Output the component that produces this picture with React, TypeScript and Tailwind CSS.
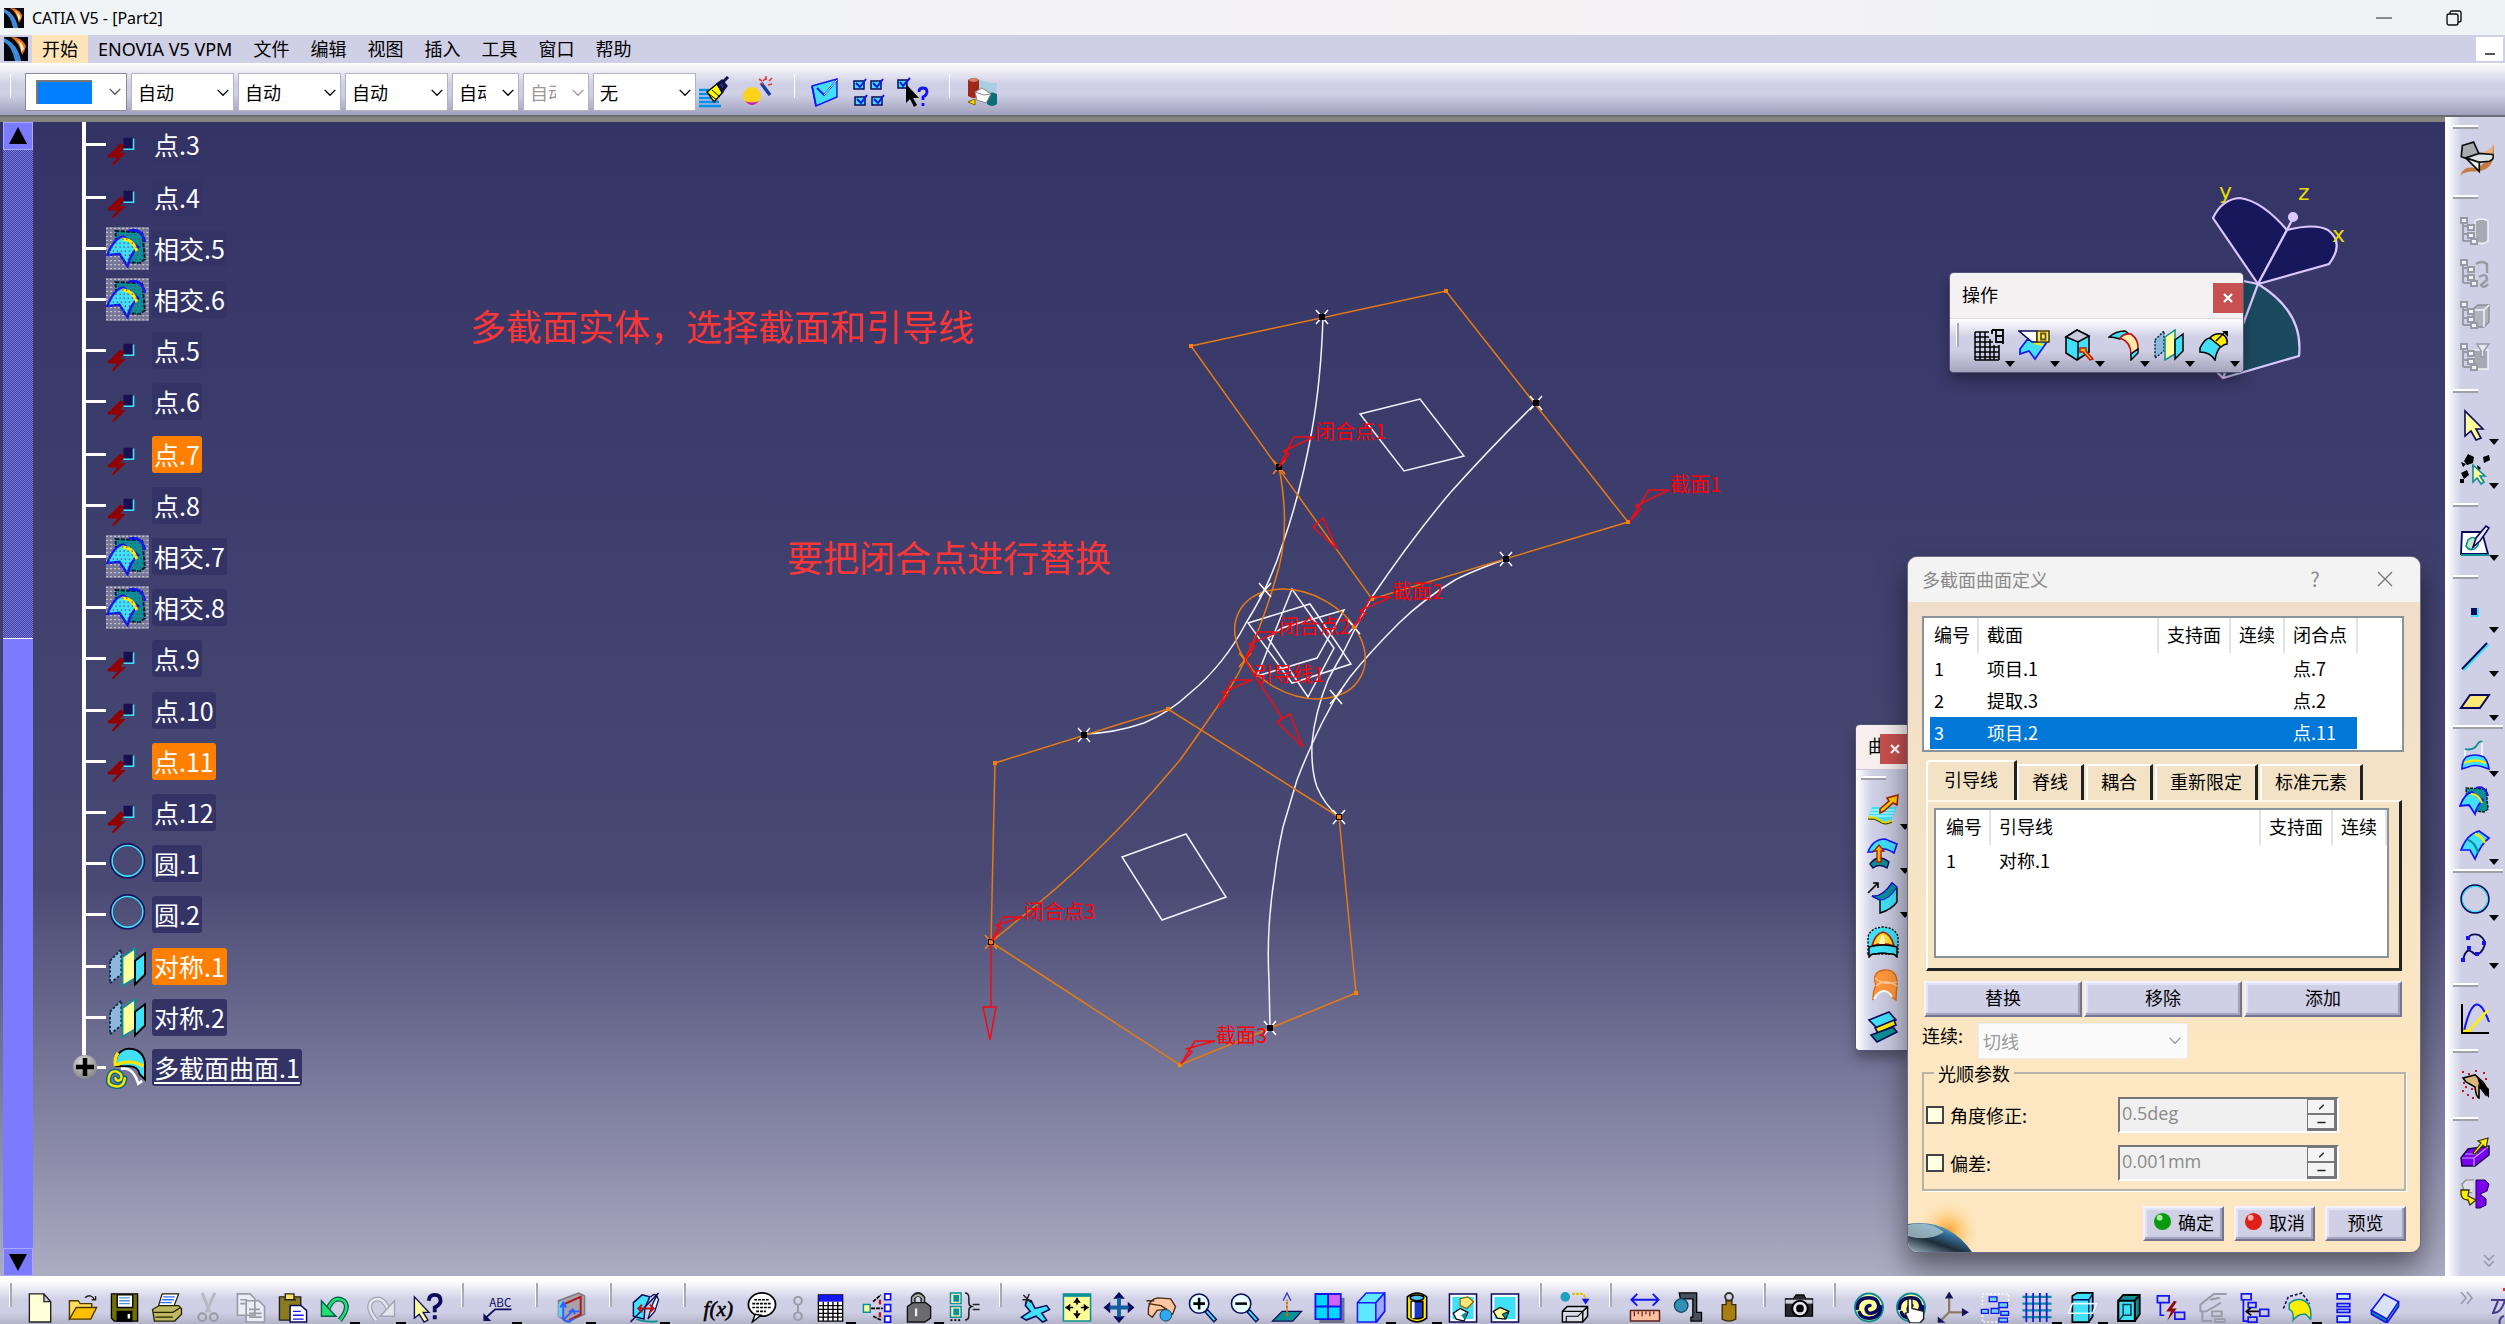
import type { ReactNode } from "react";
import clsx from "clsx";

const NAVY = "#0a0a5c";
const BLUE = "#1414f0";
const CYAN = "#40e0f8";
const TEAL = "#0a9096";
const CREAM = "#ffff99";
const GRAY = "#9a9aa6";

const workTree = (
  <g fill="#f2f2f8" stroke={GRAY} strokeWidth="2">
    <path d="M4 5v20M4 10h5M4 18h5M4 25h8" fill="none" />
    <path d="M2 2h6v5H2zM9 9h6v5H9zM9 17h6v5H9zM12 23h6v5h-6z" />
  </g>
);

const mirrorArt = (
  <g>
    <path d="M2 11l9-9v20l-9 7z" fill="#8cb8dc" stroke="#0a2a4a" strokeWidth="1.5" strokeDasharray="2 1.5" />
    <path d="M12 8L22 1v24l-10 6z" fill="#ffff99" stroke={TEAL} strokeWidth="1.5" />
    <path d="M22 11l8-6v17l-8 8z" fill={CYAN} stroke="#000" strokeWidth="1.5" />
  </g>
);

const intersectArt = (
  <g>
    <path d="M7 3l20 1 2 20-4 3-9-1-8-9z" fill={TEAL} stroke="#001a2a" strokeWidth="1.5" strokeDasharray="3 1" />
    <path d="M1 21Q6 8 13 7l11 8q-6 5-8 14l-6-9z" fill={CYAN} stroke={BLUE} strokeWidth="1.8" />
    <path d="M12 9q8 0 11 9" fill="none" stroke="#ffee00" strokeWidth="2.2" />
    <path d="M17 3q9-3 12 8" fill="none" stroke={BLUE} strokeWidth="2" />
  </g>
);

const loftArt = (
  <g>
    <path d="M7 15Q7 3 17 2q10 0 12 10v13l-4-4q-1-6-8-6z" fill={CYAN} stroke="#000" strokeWidth="1.4" />
    <path d="M8 14q9-5 20 1M9 5q-3 4-2 10" fill="none" stroke="#ffe600" strokeWidth="2.4" />
    <path d="M11 17q9-2 13 11l3-2" fill="none" stroke="#fff" strokeWidth="2" />
  </g>
);

const gear = (
  <g fill="none" strokeLinecap="round">
    <circle cx="16" cy="16" r="14.5" fill={CREAM} stroke={TEAL} strokeWidth="2" />
    <path d="M4 17Q4 6 16 6q9 0 10 8 0 7-8 8-5 0-5-5 1-3 4-3" stroke={NAVY} strokeWidth="3.6" />
    <path d="M28 15q0 12-12 12-8 0-10-6" stroke={NAVY} strokeWidth="3.6" />
  </g>
);

const lens = (
  <g>
    <path d="M19 19l10 11" stroke={NAVY} strokeWidth="5" />
    <path d="M20 20l8 9" stroke={CYAN} strokeWidth="2" />
    <circle cx="12" cy="12" r="10" fill="#e8ffff" stroke={NAVY} strokeWidth="1.6" />
  </g>
);

const icons: Record<string, ReactNode> = {
  point: (
    <g>
      <path d="M11 16L4 23h5l-7 1v1h8L5 31l8-8H9l4-5z" fill="#900000" stroke="#900000" strokeWidth="1.4" />
      <path d="M13 11h7v8h-7z" fill="#1a1050" />
      <path d="M20.500 11.500v8H13" fill="none" stroke={CYAN} strokeWidth="1.2" />
    </g>
  ),
  intersect: (
    <g>
      <path d="M0 0h32v32H0z" fill="#77779a" />
      <path d="M0 1h32M0 4h32M0 7h32M0 10h32M0 13h32M0 16h32M0 19h32M0 22h32M0 25h32M0 28h32M0 31h32" stroke="#c4c4c4" strokeWidth="1" strokeDasharray="1.500 1.500" />
      {intersectArt}
      <path d="M6 6h24M6 9h24M4 12h26M4 15h26M2 18h28M2 21h28M10 24h18M12 27h14" stroke="#50507c" strokeWidth="1" strokeDasharray="1 2" />
    </g>
  ),
  intersectTool: intersectArt,
  circleDark: (
    <g fill="none">
      <circle cx="16" cy="14" r="12" stroke="#16165c" strokeWidth="2.5" />
      <circle cx="16" cy="14" r="11.4" stroke={CYAN} strokeWidth="1.2" />
    </g>
  ),
  mirror: mirrorArt,
  loft: (
    <g>
      {loftArt}
      <g fill="none" strokeLinecap="round">
        <path d="M2 24q1-6 6-5 5 2 3 6-3 2-4-1M14 24q-1 7-7 6-6-1-5-5" stroke="#0a6a80" strokeWidth="4" />
        <path d="M2 24q1-6 6-5 5 2 3 6-3 2-4-1M14 24q-1 7-7 6-6-1-5-5" stroke="#ffe600" strokeWidth="1.8" />
      </g>
    </g>
  ),
  brush: (
    <g>
      <path d="M1 14h13M1 18h12M1 22h16M1 26h20M1 30h22" stroke="#0090f0" strokeWidth="2.4" />
      <path d="M9 16l10-8 6 8-9 10z" fill="#ffff00" stroke="#000" strokeWidth="1.4" />
      <path d="M11 18l8 6M14 14l8 7" stroke="#000" strokeWidth="1" />
      <path d="M20 8l4-3 4 5-4 5zM25 6l5-5" fill="#203080" stroke="#101040" strokeWidth="3" />
    </g>
  ),
  wizard: (
    <g>
      <circle cx="10" cy="20" r="9" fill="#ffd21a" />
      <path d="M3 25q7 8 14 0-7 3-14 0z" fill="#c01ad0" />
      <path d="M19 7l9 12" stroke="#1a3aa0" strokeWidth="3.4" />
      <path d="M17 3l3 2M24 0v4M30 2l-3 3M30 8l-4 1M21 5l3-3M18 8h3" stroke="#d04040" strokeWidth="1.6" />
    </g>
  ),
  sheetCheck: (
    <g>
      <path d="M3 10L28 3v18L7 30z" fill={CYAN} stroke={BLUE} strokeWidth="1.4" />
      <path d="M3 10l4 20M8 12l7 7L28 4" fill="none" stroke={BLUE} strokeWidth="1.8" />
      <path d="M28 4L15 19" stroke="#fff" strokeWidth="1" />
    </g>
  ),
  checks: (
    <g fill={CYAN} stroke={NAVY} strokeWidth="1.5">
      <path d="M1 5h10v8H1zM18 5h10v8H18zM2 21h10v8H2zM19 21h10v8H19z" />
      <path d="M3 7l4 4 6-8M20 7l4 4 6-8M4 23l4 4 6-8M21 23l4 4 6-8" fill="none" stroke={BLUE} strokeWidth="2" />
    </g>
  ),
  checkHelp: (
    <g>
      <path d="M1 4h9v8H1z" fill={CYAN} stroke={NAVY} strokeWidth="1.5" />
      <path d="M3 6l3 4 7-8" fill="none" stroke={BLUE} strokeWidth="2" />
      <path d="M9 8v19l4-4 4 8 3-2-4-7h6z" fill="#000" />
      <path d="M22 16q0-4 4-4t4 4q0 3-4 5v3M26 27v3" fill="none" stroke={BLUE} strokeWidth="2.8" />
    </g>
  ),
  partner: (
    <g>
      <path d="M9 1q10 7 22 6l-2 16-12 4z" fill="#a8cce0" />
      <path d="M2 4q6-4 11 0v16q-5 4-11 0z" fill="#a02818" />
      <path d="M2 4q6-4 11 0-5 4-11 0z" fill="#d88070" />
      <path d="M21 18q5-3 10 0v10q-5 4-10 0z" fill="#0a7078" />
      <path d="M9 16l7-4 9 6-5 9-9-3z" fill="#fff" stroke="#888" strokeWidth="1" />
      <path d="M9 16l9 3 7-1" fill="none" stroke="#888" strokeWidth="1" />
      <path d="M2 26l7-3v6z" fill="#ffe000" stroke="#806000" strokeWidth="1" />
    </g>
  ),
  workbench: (
    <g>
      <path d="M1 31Q4 22 14 24 28 20 31 2v12Q28 28 12 27 4 27 1 31z" fill="#c47a40" />
      <path d="M20 10Q29 8 31 1l-2 16z" fill="#e8b088" />
      <path d="M3 4L13 1l5 11-10 4-6-2z" fill="#a8acae" stroke="#111" strokeWidth="1.5" />
      <path d="M6 15l12-4 12 1q2 4-3 6l-10 1z" fill="#dfe3e4" stroke="#111" strokeWidth="1.5" />
      <path d="M6 15l12 4v8z" fill="#f4f6f6" stroke="#111" strokeWidth="1.5" />
    </g>
  ),
  grayA: (
    <g>
      <path d="M16 5q7-4 13 0v20q-6 5-13 0z" fill="#a8a8b2" stroke="#f4f4fa" strokeWidth="1.4" />
      {workTree}
    </g>
  ),
  grayB: (
    <g>
      {workTree}
      <path d="M17 6q6-4 11 0v9M20 19q8-5 8 3l-6 5q3 4 7-1" fill="none" stroke={GRAY} strokeWidth="2.4" />
    </g>
  ),
  grayC: (
    <g>
      <path d="M14 9l5-4h11v17l-5 5H14z" fill="#b2b2bc" stroke="#8e8e98" strokeWidth="1.4" />
      <path d="M14 10h11v17M25 10l5-5" fill="none" stroke="#f4f4fa" strokeWidth="1.5" />
      {workTree}
    </g>
  ),
  grayD: (
    <g>
      <path d="M15 8h14v19H15z" fill="#a8a8b2" stroke="#f4f4fa" strokeWidth="1.4" />
      <path d="M18 2h12l-5 7v6h-3V9z" fill="#e6e6ee" stroke={GRAY} strokeWidth="1.5" />
      {workTree}
    </g>
  ),
  arrow: (
    <path d="M6 2v25l6-5 5 9 5-2-5-9h7z" fill={CREAM} stroke={NAVY} strokeWidth="1.6" />
  ),
  geoSelect: (
    <g>
      <path d="M9 1l6 3-1 6-6 2-3-4zM24 4l6-2 1 5-6 3zM2 20l6-3 2 5-5 4zM18 12l4 3-3 3zM1 26h4v4H1zM13 13l3 2-2 2zM2 9l5 2-3 3z" fill="#000" />
      <path d="M14 12v17l4-4 4 6 3-2-4-6h5z" fill={CREAM} stroke={TEAL} strokeWidth="1.6" />
    </g>
  ),
  sketch: (
    <g>
      <path d="M3 7h20l6 22H2z" fill="#fff" stroke={NAVY} strokeWidth="1.8" />
      <path d="M2 30h28" stroke={TEAL} strokeWidth="2" />
      <path d="M9 15q5-5 9 0t-3 9q-5 2-8-3z" fill="#c8e8c8" stroke={TEAL} strokeWidth="1.6" />
      <path d="M14 22l3-9L27 1l3 2-9 13z" fill="#e8e8ff" stroke={NAVY} strokeWidth="1.6" />
    </g>
  ),
  pointTool: (
    <g>
      <path d="M12 11h8v9h-8z" fill={CYAN} />
      <path d="M12 11h6v7h-6z" fill={NAVY} />
    </g>
  ),
  line: (
    <g>
      <path d="M4 29L29 3" stroke={CYAN} strokeWidth="3.4" />
      <path d="M3 28L28 2" stroke={NAVY} strokeWidth="2" />
    </g>
  ),
  plane: <path d="M11 10h19l-9 13H2z" fill="#ffe873" stroke={NAVY} strokeWidth="2" />,
  sweep: (
    <g>
      <path d="M6 10q8 2 12-4 3-5 5-3" fill="none" stroke={TEAL} strokeWidth="1.8" />
      <path d="M6 11v8M23 4v13" stroke="#fff" strokeWidth="1.4" />
      <path d="M3 30q0-8 4-12 9-4 18 0 4 4 5 12l-6-2q-8-3-15 0z" fill={CYAN} stroke={BLUE} strokeWidth="1.6" />
      <path d="M5 24q11-5 22 0" fill="none" stroke="#ffe600" strokeWidth="2.4" />
    </g>
  ),
  fillSurf: (
    <g>
      <path d="M2 21Q8 5 20 2l10 7q-8 6-14 21l-5-9z" fill={CYAN} stroke={BLUE} strokeWidth="1.7" />
      <path d="M9 11q7 2 10 13" fill="none" stroke={TEAL} strokeWidth="2.2" />
      <path d="M16 5q7 2 10 9" fill="none" stroke="#ffe600" strokeWidth="2.4" />
    </g>
  ),
  circle: (
    <g fill="none">
      <circle cx="16" cy="16" r="13.5" stroke={NAVY} strokeWidth="2.4" />
      <circle cx="16" cy="16" r="12.6" stroke={CYAN} strokeWidth="1.2" />
    </g>
  ),
  spline: (
    <g>
      <path d="M9 7q3-5 11-3 9 6 4 14-5 9-11 3-6-5-9 8" fill="none" stroke={NAVY} strokeWidth="1.8" />
      <path d="M7 5h4v4H7zM23 10h4v4h-4zM16 21h4v4h-4zM8 15h4v4H8zM2 27h4v4H2z" fill={BLUE} />
    </g>
  ),
  chart: (
    <g fill="none" strokeWidth="2">
      <path d="M5 28Q16-20 30 19" stroke={BLUE} />
      <path d="M4 28h6L29 7" stroke="#ffee00" strokeWidth="2.6" />
      <path d="M3 1v29h27" stroke="#000" />
    </g>
  ),
  wand: (
    <g>
      <path d="M3 3h2M9 5h2M16 2h2M24 4h2M4 14h2M3 22h2M8 26h2M12 20h2M26 10h2M6 18h2M13 29h2" stroke="#c01818" strokeWidth="2.2" />
      <path d="M4 9l12-3 8 7q5 6 3 13l-7-9v12q-3-1-4-11l-9-5z" fill="#d8b878" stroke="#000" strokeWidth="1.6" />
      <path d="M18 8l12 12v9l-9-11z" fill="#000" />
    </g>
  ),
  extrude: (
    <g>
      <path d="M2 22l7-9 21-3v9L16 30H3z" fill="#7a00f0" stroke="#1a0050" strokeWidth="1.5" />
      <path d="M3 22h12l14-11M6 18h12M15 22v8" fill="none" stroke="#c8a0ff" strokeWidth="1.2" />
      <path d="M14 17l8-10-3-2 10-3-2 10-3-3-8 9z" fill="#ffee00" stroke="#333300" strokeWidth="1.2" />
    </g>
  ),
  revolve: (
    <g>
      <path d="M17 2h9l4 4-2 7-7 3 6 5v6l-6 3h-4z" fill="#7a00f0" stroke="#1a0050" strokeWidth="1" />
      <path d="M15 2H7L3 6l2 7 8 2" fill="#dcdce6" stroke="#888" strokeWidth="1.2" />
      <path d="M2 12h8l-1 6 8 4-6 5-2-5q-8 0-7-10z" fill="#ffee00" stroke="#333300" strokeWidth="1.3" />
    </g>
  ),
  extrapol: (
    <g>
      <path d="M5 13h25l-5 12q-8 4-13 1T1 24z" fill={CYAN} />
      <path d="M4 16h24M3 19h24M2 22h24" fill="none" stroke="#e8ffff" strokeWidth="1.2" />
      <path d="M1 24q7-1 12 3t12 0" fill="none" stroke="#e8e000" strokeWidth="3" />
      <path d="M1 25q7-1 12 3t12 0" fill="none" stroke="#222" strokeWidth="1" />
      <path d="M13 15l9-8-2-3 11-3-1 10-4-2-9 8-4 2z" fill="#ffcc00" stroke="#a02000" strokeWidth="1.5" />
    </g>
  ),
  offset: (
    <g>
      <path d="M1 14Q6 1 18 1l12 5-3 9q-12-8-22-1z" fill={CYAN} stroke={BLUE} strokeWidth="1.6" />
      <path d="M3 26q8-11 19-2l-2 6q-8-5-14 0z" fill={TEAL} stroke={NAVY} strokeWidth="1.4" />
      <path d="M10 24V13H7l5-6 5 6h-3v11z" fill="#ffb400" stroke="#a02000" strokeWidth="1.3" />
    </g>
  ),
  extrudeSurf: (
    <g>
      <path d="M1 11L11 1M6 1h5v5" fill="none" stroke="#000" strokeWidth="1.6" />
      <path d="M5 14q10 2 20-13l5 5v14Q24 28 13 31V18z" fill={CYAN} stroke="#000" strokeWidth="1.4" />
      <path d="M5 14q10 2 20-13l5 4Q22 18 13 18z" fill={TEAL} stroke={BLUE} strokeWidth="1.2" />
    </g>
  ),
  cap: (
    <g>
      <path d="M1 28V11Q3 2 16 1q13 1 15 10v17z" fill={CYAN} stroke="#000" strokeWidth="1.4" strokeDasharray="2 1.5" />
      <path d="M5 20Q8 8 16 6q8 2 11 14-11-4-22 0z" fill="#ffe030" stroke="#b02000" strokeWidth="1.8" />
      <path d="M12 18q1-8 4-9 2 2 2 9z" fill="#fff8c0" />
      <path d="M2 21q14-4 28 0v10q-3-4-8-3-7-2-13 0-4-1-7 3z" fill={CYAN} stroke="#000" strokeWidth="1.4" />
    </g>
  ),
  orangeLoft: (
    <g fill="#ff963c" stroke="#d86a10" strokeWidth="1.3">
      <path d="M9 16Q4 3 17 1q13-1 13 13l-1 17-5-4q-2-6-9-5-5 1-9 9 0-9 3-15z" />
      <path d="M9 17q9-8 21 0M8 9q9 8 22 4" fill="none" stroke="#ffd0a0" />
      <path d="M7 30q4-8 10-8 5 0 8 6" fill="none" stroke="#fff" strokeWidth="2" />
    </g>
  ),
  bands: (
    <g strokeWidth="1.6">
      <path d="M2 9l20-8 7 8L10 17z" fill={CYAN} stroke={NAVY} />
      <path d="M8 17l19-8 2 5-18 8z" fill="#ffee00" stroke={NAVY} />
      <path d="M4 24l22-8 4 5-20 10z" fill={TEAL} stroke={NAVY} />
    </g>
  ),
  gridOp: (
    <g fill="none" stroke="#000" strokeWidth="1.5">
      <path d="M2 3h14M2 8h14M2 13h18M2 18h24M2 23h24M2 28h24M2 31h24M2 3v28M7 3v28M12 3v28M17 10v21M21 16v15M26 16v15" />
      <path d="M19 1h11v14M19 1v4M23 1v12h7M23 7h7" strokeWidth="1.8" />
    </g>
  ),
  healing: (
    <g>
      <path d="M2 20l7-9 20 2L17 30l-6-8-9 3z" fill={CYAN} stroke={BLUE} strokeWidth="1.7" />
      <path d="M16 14l9 2" stroke="#ffe600" strokeWidth="2.2" />
      <path d="M1 2h18v11h-5z" fill="#fff" stroke={NAVY} strokeWidth="1.6" />
      <path d="M19 2h12v11H19z" fill="#ffe873" stroke="#4a4000" strokeWidth="1.6" />
      <path d="M23 4.500h4.500v6H23z" fill="#ffe873" stroke="#6a5600" strokeWidth="1.8" />
    </g>
  ),
  boundary: (
    <g>
      <path d="M3 8l11-7 12 6v16l-12 8-11-7z" fill={CYAN} stroke="#000" strokeWidth="1.6" />
      <path d="M3 8l11-7 12 6-11 6z" fill="#c8c8de" stroke="#000" strokeWidth="1.5" />
      <path d="M15 13v17" stroke="#000" strokeWidth="1.5" />
      <path d="M17 19h6v3l7 8-3 1-7-8h-3z" fill="#ffb400" stroke="#c01010" strokeWidth="1.4" />
    </g>
  ),
  fillet: (
    <g>
      <path d="M1 8Q8 2 17 2l4 3q-6 3-9 5-6-2-11-2z" fill={CYAN} stroke="#000" strokeWidth="1.4" />
      <path d="M12 9q4-5 11-4 8 6 7 15l-7 5q0-12-11-16z" fill="#ffe8a8" stroke="#c01010" strokeWidth="1.6" />
      <path d="M23 25l7-5v4l-7 7z" fill={CYAN} stroke="#000" strokeWidth="1.4" />
    </g>
  ),
  extend: (
    <g>
      <path d="M2 19q5-10 10-10l11 8q-5 6-6 14-5-8-15-8z" fill={CYAN} stroke="#000" strokeWidth="1.6" />
      <path d="M12 9q4-5 12-4 6 3 5 10-3 0-6 3z" fill="#ffee00" stroke="#000" strokeWidth="1.5" />
      <path d="M18 12l8-8" stroke="#000" strokeWidth="1.5" />
      <path d="M24 2h6v6z" fill="#000" />
    </g>
  ),
  newFile: <path d="M4 2h15l7 8v21H4zM19 2v8h7" fill="#ffffd8" stroke="#222" strokeWidth="1.4" />,
  open: (
    <g stroke="#4a3400" strokeWidth="1.4">
      <path d="M2 28V9h9l2 3h12v6H10z" fill="#ffe060" />
      <path d="M2 28l7-12h21l-6 12z" fill="#ffc000" />
      <path d="M18 6q6-5 10 2M25 8h4V4" fill="none" stroke="#222" />
    </g>
  ),
  save: (
    <g stroke="#000" strokeWidth="1.4">
      <path d="M2 2h27v28H5l-3-3z" fill="#707000" />
      <path d="M8 3h16v13H8z" fill="#fff" />
      <path d="M10 6h11M10 9h11M10 12h11" stroke="#5090e0" />
      <path d="M8 20h15v10H8z" fill="#000" />
      <path d="M18 22h4v6h-4z" fill="#fff" />
    </g>
  ),
  print: (
    <g stroke="#222200" strokeWidth="1.3">
      <path d="M11 2h17l-5 13H7z" fill="#fff" />
      <path d="M12 5h12M11 8h12M9 11h12" stroke="#3070ff" />
      <path d="M1 18l7-4h20l3 3v6l-7 7H3z" fill="#c0b860" />
      <path d="M2 21h20l8-5M4 26h18" fill="none" />
    </g>
  ),
  cut: (
    <g fill="none" stroke={GRAY} strokeWidth="2">
      <path d="M9 1l8 20M22 1l-9 20" stroke="#b8b8c2" strokeWidth="3" />
      <circle cx="9" cy="26" r="4" />
      <circle cx="21" cy="26" r="4" />
    </g>
  ),
  copy: (
    <g fill="#ececf4" stroke={GRAY} strokeWidth="1.7">
      <path d="M2 2h13l5 5v17H2zM11 9h13l6 6v16H11z" />
      <path d="M14 18h11M14 22h13M14 26h13M5 8h7M5 12h5" />
    </g>
  ),
  paste: (
    <g>
      <path d="M2 5h22v24H2z" fill="#8a7a20" stroke="#222" strokeWidth="1.4" />
      <path d="M8 2h9v6H8zM7 8h12" fill="#ffe060" stroke="#222" strokeWidth="1.4" />
      <path d="M13 14h11l6 5v12H13z" fill="#fff" stroke={NAVY} strokeWidth="1.5" />
      <path d="M16 20h8M16 24h11M16 28h11" stroke={BLUE} strokeWidth="1.4" />
    </g>
  ),
  undo: (
    <g>
      <path d="M9 17q6-14 16-8 7 7-4 20" fill="none" stroke="#0a5a4a" strokeWidth="5" />
      <path d="M9 17q6-14 16-8 7 7-4 20" fill="none" stroke="#20e070" strokeWidth="2.6" />
      <path d="M2 9v16h15z" fill="#20e070" stroke="#0a5a4a" strokeWidth="1.4" />
    </g>
  ),
  redo: (
    <g>
      <path d="M23 17Q17 3 7 9q-7 7 4 20" fill="none" stroke="#a4a4ae" strokeWidth="5" />
      <path d="M23 17Q17 3 7 9q-7 7 4 20" fill="none" stroke="#e4e4ee" strokeWidth="2.6" />
      <path d="M30 9v16H15z" fill="#e4e4ee" stroke="#a4a4ae" strokeWidth="1.4" />
    </g>
  ),
  help: (
    <g>
      <path d="M3 5v22l5-4 5 8 4-2-5-8h6z" fill={CREAM} stroke={NAVY} strokeWidth="1.4" />
      <path d="M18 9q0-6 6-6t6 6q0 4-6 7v5M24 24v4" fill="none" stroke={NAVY} strokeWidth="4" />
    </g>
  ),
  abc: (
    <g>
      <text x="8" y="15" fontSize="12" fill={NAVY}>ABC</text>
      <path d="M31 18H14L4 27" fill="none" stroke={NAVY} strokeWidth="1.8" />
      <path d="M2 22v8h8z" fill={NAVY} />
    </g>
  ),
  bookAxis: (
    <g strokeWidth="1.5">
      <path d="M3 9L24 1l6 3v19l-18 8-9-6z" fill="#a8a0aa" stroke="#7a7a80" />
      <path d="M10 12L26 5v18l-12 6" fill="none" stroke="#b01818" strokeWidth="2" />
      <path d="M3 12l6-4v16l-6 2z" fill="#6ad0f8" stroke="none" />
      <path d="M8 29V12M5 16l3-5 3 5M8 29l9-9h8M14 21l4-3 2 5M8 29l6 2 5-4" fill="none" stroke="#2a60ff" strokeWidth="2" />
    </g>
  ),
  paramSurf: (
    <g>
      <path d="M4 11L13 3l8 2-5 11-1 12-11-3z" fill={CYAN} stroke={NAVY} strokeWidth="1.5" />
      <path d="M24 12l4-8 2 4-4 12-7 8z" fill="#dff4ff" stroke={NAVY} strokeWidth="1.3" />
      <path d="M1 31L30 1M22 5q4-5 7 0" fill="none" stroke={NAVY} strokeWidth="1.5" />
      <path d="M10 17h14M13 13l-4 4 4 4M21 13l4 4-4 4" fill="none" stroke="#c01010" strokeWidth="2" />
      <path d="M7 28q12 4 22 2" stroke={TEAL} fill="none" strokeWidth="1.8" />
    </g>
  ),
  fx: (
    <text x="0" y="25" fontSize="22" fontStyle="italic" fill="#000" stroke="#000" strokeWidth="0.6" className="font-['Liberation_Serif',serif]">
      f(x)
    </text>
  ),
  balloon: (
    <g>
      <ellipse cx="17" cy="13" rx="14" ry="12" fill="#fff" stroke="#000" strokeWidth="1.8" />
      <path d="M10 23l-3 8 9-7z" fill="#fff" stroke="#000" strokeWidth="1.5" />
      <path d="M9 8h16M7 12h20M7 16h20M11 20h10" stroke="#000" strokeWidth="1.8" strokeDasharray="3 1" />
    </g>
  ),
  grayLink: (
    <g fill="none" stroke={GRAY} strokeWidth="2">
      <circle cx="16" cy="9" r="4" />
      <circle cx="16" cy="25" r="4" />
      <path d="M16 13v8" />
    </g>
  ),
  table: (
    <g>
      <path d="M3 3h25v27H3z" fill="#fff" stroke="#000" strokeWidth="1.4" />
      <path d="M3 3h25v7H3z" fill={BLUE} />
      <path d="M3 14h25M3 18h25M3 22h25M3 26h25M8 10v20M13 10v20M18 10v20M23 10v20" stroke="#000" strokeWidth="1.4" />
    </g>
  ),
  relations: (
    <g>
      <path d="M2 13h7v8H2z" fill={CREAM} stroke={TEAL} strokeWidth="1.6" />
      <path d="M24 2h6v6h-6zM24 13h6v7h-6zM24 25h6v6h-6z" fill="#fff" stroke={BLUE} strokeWidth="1.8" />
      <path d="M10 17h12M12 10l8-7M12 25l8 4" stroke="#000" strokeWidth="1.8" strokeDasharray="4 1" />
      <path d="M19 8v5M19 21v5" stroke="#c01010" strokeWidth="2.4" />
    </g>
  ),
  lock: (
    <g>
      <path d="M10 14V6q5-7 10 0v8" fill="none" stroke="#222" strokeWidth="5" />
      <path d="M10 14V6q5-6 10 0v8" fill="none" stroke="#aaa" strokeWidth="2" />
      <path d="M4 15l6-4h13l5 4v12l-6 4H4z" fill="#6c6c70" stroke="#111" strokeWidth="1.4" />
      <path d="M13 17v8" stroke="#eee" strokeWidth="2.4" />
    </g>
  ),
  listBrace: (
    <g>
      <path d="M1 1h11v11H1zM1 15h11v11H1z" fill="#f0f0c0" stroke={TEAL} strokeWidth="1.5" />
      <path d="M4 3h6v7H4zM4 17h6v7H4z" fill={TEAL} />
      <path d="M16 1q4 0 4 5v5q0 3 3 4-3 1-3 4v5q0 5-4 5M24 13h7M24 18h7" fill="none" stroke="#222" strokeWidth="1.6" />
      <path d="M1 29h12" stroke="#000" strokeWidth="2" strokeDasharray="2 2" />
    </g>
  ),
  plane3d: (
    <g>
      <path d="M8 8l4 1 4 8 12-3 3 4-8 4 5 7-4 2-7-6-10 4-5-3 9-6-5-6z" fill={CYAN} stroke={NAVY} strokeWidth="1.6" />
      <path d="M4 3l8 8M10 2L6 12M3 8h6" stroke="#222" strokeWidth="1.5" />
    </g>
  ),
  fitAll: (
    <g>
      <path d="M2 2h28v28H2z" fill={CREAM} stroke={TEAL} strokeWidth="1.6" />
      <path d="M2 2h28v3H2z" fill={TEAL} />
      <path d="M16 6v7M16 19v8M4 16h8M20 16h8" stroke="#000" strokeWidth="1.8" />
      <path d="M12 11l4-5 4 5zM12 22l4 5 4-5zM9 12l-5 4 5 4zM23 12l5 4-5 4z" fill="#000" />
    </g>
  ),
  pan: (
    <g fill={NAVY}>
      <path d="M16 0l6 7H10zM16 32l6-7H10zM0 16l7-6v12zM32 16l-7-6v12z" />
      <path d="M14 6h4v20h-4zM6 14h20v4H6z" fill="#1060a0" />
    </g>
  ),
  rotate: (
    <g>
      <path d="M3 17Q4 7 13 6l13 1 5 8-3 8-6 2-2-7-8 1-5 7-4-3z" fill="#ffc8a0" stroke="#4a2a10" strokeWidth="1.4" />
      <path d="M3 12l13 2 6 4M1 9h8" fill="none" stroke="#4a2a10" strokeWidth="1.4" />
      <circle cx="21" cy="24" r="6" fill="#30a8f0" stroke="#104060" strokeWidth="1" />
    </g>
  ),
  zoomIn: (
    <g>
      {lens}
      <path d="M12 6v12M6 12h12" stroke="#000" strokeWidth="2.6" />
    </g>
  ),
  zoomOut: (
    <g>
      {lens}
      <path d="M6 12h12" stroke="#000" strokeWidth="2.6" />
    </g>
  ),
  normalView: (
    <g>
      <path d="M11 20h20l-9 10H1z" fill={TEAL} stroke={NAVY} strokeWidth="1.3" />
      <path d="M16 25V8" stroke="#d07000" strokeWidth="2" strokeDasharray="3 1" />
      <path d="M12 9l4-8 4 8" fill="none" stroke="#4040c0" strokeWidth="1.5" />
    </g>
  ),
  multiView: (
    <g>
      <path d="M6 6h26v26H6z" fill="#70708a" />
      <path d="M2 2h26v26H2z" fill="#00d8ff" stroke={BLUE} strokeWidth="2" />
      <path d="M16 3h11v12H16z" fill="#d860f0" />
      <path d="M15 2v26M2 15h26" stroke={BLUE} strokeWidth="2" />
    </g>
  ),
  isoView: (
    <g stroke="#1a1aff" strokeWidth="1.6">
      <path d="M2 11L11 1h19v19l-8 11H2z" fill="#60e8ff" />
      <path d="M2 11h19v19M21 11l9-10" fill="none" />
      <path d="M21 11l9-10v19l-9 11z" fill="#a0a8ff" />
    </g>
  ),
  cylinder: (
    <g stroke="#000" strokeWidth="1.6">
      <path d="M6 5q10-8 20 0v22q-10 8-20 0z" fill="#ffe600" />
      <path d="M10 10h12v16q-6 3-12 0z" fill="#1a3ac0" />
      <path d="M12 10v17" stroke="#fff" strokeWidth="3" />
      <ellipse cx="16" cy="6" rx="7" ry="3" fill="#50c0f0" />
    </g>
  ),
  hideShow: (
    <g>
      <path d="M2 2h28v29H2z" fill="#fff" stroke={NAVY} strokeWidth="1.6" />
      <path d="M5 5h22v23H5z" fill={CYAN} />
      <path d="M13 7l8-2 6 5-7 7-7-3z" fill="#ffe873" stroke="#806000" strokeWidth="1.2" />
      <path d="M6 22l7-5 8 4-4 9-8-2z" fill="#fff" stroke="#000" strokeWidth="1.3" />
      <path d="M14 24l6-4-2 9z" fill={TEAL} />
    </g>
  ),
  swapSpace: (
    <g>
      <path d="M2 2h28v29H2z" fill="#fff" stroke={NAVY} strokeWidth="1.6" />
      <path d="M5 5h22v23H5z" fill={CYAN} />
      <path d="M4 20l7-4 9 4-4 8-8-1z" fill="#ffff99" stroke="#000" strokeWidth="1.3" />
      <path d="M13 23l7-3-3 8z" fill={TEAL} stroke="#000" />
    </g>
  ),
  catalog: (
    <g>
      <circle cx="6" cy="5" r="5" fill="#20a0c0" />
      <path d="M13 2h10q4 1 4 7" fill="none" stroke="#e0c000" strokeWidth="2.2" strokeDasharray="3 1" />
      <path d="M23 7h8l-4 6z" fill={BLUE} />
      <path d="M3 20l5-5h21v10l-5 6H3zM3 20h21v11M24 20l5-5" fill="#dcdce8" stroke="#000" strokeWidth="1.5" />
      <path d="M7 25h12l5-5M7 25v6" fill="none" stroke="#000" strokeWidth="1.2" />
    </g>
  ),
  measure: (
    <g>
      <path d="M2 8h28M8 2L2 8l6 6M24 2l6 6-6 6" fill="none" stroke={BLUE} strokeWidth="2" />
      <path d="M1 19h30v11H1z" fill="#ffc0a0" stroke="#5a2020" strokeWidth="1.5" />
      <path d="M5 20v5M9 20v3M13 20v5M17 20v3M21 20v5M25 20v3" stroke="#5a2020" strokeWidth="1.3" />
    </g>
  ),
  caliper: (
    <g>
      <path d="M8 1h18v20h5v9H20v-4h2V7h-9l-3 5z" fill="#45505a" stroke="#000" strokeWidth="1.3" />
      <circle cx="10" cy="14" r="7" fill="#3090b8" stroke="#104050" strokeWidth="1.2" />
    </g>
  ),
  weight: (
    <g>
      <circle cx="16" cy="5" r="4" fill="none" stroke="#333" strokeWidth="2" />
      <path d="M13 9h6v4h4v15q-7 4-14 0V13h4z" fill="#a87e10" stroke="#3a2a00" strokeWidth="1.4" />
    </g>
  ),
  camera: (
    <g>
      <path d="M2 7h8l3-4h8l2 4h7v18H2z" fill="#26262c" stroke="#000" strokeWidth="1.2" />
      <path d="M2 8h28v4H2z" fill="#d0d0dc" />
      <circle cx="17" cy="17" r="8" fill="#e8e8f0" stroke="#000" strokeWidth="2" />
      <circle cx="17" cy="17" r="4" fill="#000" />
    </g>
  ),
  update: gear,
  manualUpdate: (
    <g>
      {gear}
      <path d="M13 8q3-3 4 1v8l12 3v8l-4 4H15l-5-10 3-1z" fill="#fff" stroke="#222" strokeWidth="1.5" />
    </g>
  ),
  axis: (
    <g stroke="#1a1a60" strokeWidth="1.6">
      <path d="M12 3v18h18M12 21L2 31" fill="none" stroke="#8a7a60" strokeWidth="2.2" />
      <path d="M9 6l3-5 3 5zM26 18l5 3-5 3zM1 27v4h5z" fill={NAVY} />
    </g>
  ),
  histTree: (
    <g>
      <path d="M3 2h27v29H3z" fill="none" stroke="#fff" strokeWidth="1.6" strokeDasharray="2 2" />
      <path d="M10 5h8v5h-8zM20 11h9v5h-9zM2 18h7v4H2zM12 17h8v5h-8zM22 20h8v4h-8zM20 27h9v4h-9z" fill="#70d0e8" stroke={BLUE} strokeWidth="1.4" />
    </g>
  ),
  gridBlue: (
    <g fill="none">
      <path d="M1 5h30M1 12h30M1 19h30M1 26h30" stroke={TEAL} strokeWidth="2.2" />
      <path d="M5 1v30M12 1v30M19 1v30M26 1v30" stroke={BLUE} strokeWidth="1.8" />
    </g>
  ),
  boxPlane: (
    <g>
      <path d="M5 4l5-3h16v24l-4 6H5z" fill={CYAN} stroke="#000" strokeWidth="1.8" />
      <path d="M5 8h17v22M22 8l4-6" fill="none" stroke={NAVY} strokeWidth="1.4" />
      <path d="M1 22l4-10h25l-4 10z" fill="none" stroke="#e8f8f8" strokeWidth="1.6" />
    </g>
  ),
  cubeCyan: (
    <g stroke="#000" strokeWidth="2">
      <path d="M5 9l5-6h17v20l-5 7H5z" fill={TEAL} />
      <path d="M5 9h17v21H5z" fill={CYAN} />
      <path d="M22 9l5-6" />
      <path d="M10 13h8v11h-8zM10 24l-4 5" fill={CYAN} stroke="#04404a" strokeWidth="1.6" />
    </g>
  ),
  bolt: (
    <g>
      <path d="M2 4h12v7H2zM20 21h10v7H20zM5 11v13h4" fill="none" stroke={BLUE} strokeWidth="1.8" />
      <path d="M19 9l-8 11h5l-4 10 10-13h-5l5-7z" fill="#900808" />
    </g>
  ),
  grayHand: (
    <g fill="none" stroke={GRAY} strokeWidth="2">
      <path d="M30 2H17L3 13v7h6l9-5 6-4M13 8l10-2" />
      <path d="M5 20v10h10M15 20h10v5H15zM18 28h10v3H18z" />
    </g>
  ),
  treeArrow: (
    <g fill="none" stroke={BLUE} strokeWidth="1.8">
      <path d="M2 2h10v6H2zM4 8v22h5M9 11h8v5H9zM9 26h9v5H9zM21 18h9v7h-9z" />
      <path d="M20 20H8M12 16l-5 4 5 4" stroke="#000" />
    </g>
  ),
  yellowSurf: (
    <g>
      <path d="M2 17L7 5l14-4 8 11" fill="none" stroke={NAVY} strokeWidth="1.6" strokeDasharray="3 2" />
      <path d="M8 12q5-5 13-4 11 3 9 20l-5-5q-8-1-13 6 1-9-4-11z" fill="#ffee00" stroke={TEAL} strokeWidth="1.5" />
    </g>
  ),
  stack: (
    <g fill="#c8ecf4" stroke={BLUE} strokeWidth="1.8">
      <path d="M10 2h13v5H10zM10 12h13v3H10zM10 18h13v3H10zM10 25h13v6H10z" />
    </g>
  ),
  bookBlue: (
    <g stroke={BLUE} strokeWidth="1.7">
      <path d="M2 19L15 2l15 8-12 18z" fill="#d8e4f4" />
      <path d="M2 19l16 9v4L2 23zM18 32l12-17v-5" fill={TEAL} />
    </g>
  ),
};

function Icon({ name, className = "size-8" }: { name: string; className?: string }) {
  return (
    <svg viewBox="0 0 32 32" className={clsx("shrink-0", className)} aria-hidden="true">
      {icons[name]}
    </svg>
  );
}

function AppLogo({ className }: { className: string }) {
  return (
    <svg viewBox="0 0 24 24" className={clsx("shrink-0", className)} aria-hidden="true">
      <path d="M0 0h24v24H0z" fill="#05070f" />
      <path d="M0 1q14 6 17 23h-6Q8 9 0 5z" fill="#3c8cd8" />
      <path d="M7 0q11 0 15 9-1 5-4 9Q16 6 7 0z" fill="#e8701a" />
      <path d="M13 3q6 3 7 9l-3 3q0-7-4-12z" fill="#fff0b0" />
    </svg>
  );
}

function Chevron({ className }: { className?: string }) {
  return (
    <svg viewBox="0 0 14 9" className={clsx("pointer-events-none absolute h-2 w-3.5", className)} aria-hidden="true">
      <path d="M1 1l6 6 6-6" fill="none" stroke="currentColor" strokeWidth="1.5" />
    </svg>
  );
}

function Flyout({ className }: { className: string }) {
  return (
    <svg viewBox="0 0 10 6" className={clsx("absolute h-1.5 w-2.5", className)} aria-hidden="true">
      <path d="M0 0h10L5 6z" />
    </svg>
  );
}

function GripV() {
  return <span className="h-6 w-[3px] border-l border-white bg-[#a9a9b5]" />;
}

function GripH({ wide }: { wide?: boolean }) {
  return <span className={clsx("h-1 border-t-2 border-white bg-[#a0a0a8]", wide ? "w-[50px]" : "w-[25px]")} />;
}

const menus = ["ENOVIA V5 VPM", "文件", "编辑", "视图", "插入", "工具", "窗口", "帮助"];

function TitleBar() {
  return (
    <header className="font-['Noto_Sans','Noto_Sans_CJK_SC',sans-serif]">
      <div className="flex h-[35px] items-center bg-[linear-gradient(90deg,#eff4f6,#f5f2f4_60%,#eef3f5)] pl-1">
        <AppLogo className="size-5" />
        <h1 className="ml-2 text-[16px] leading-6">CATIA V5 - [Part2]</h1>
        <button aria-label="最小化" className="ml-auto flex w-[70px] justify-center">
          <svg viewBox="0 0 16 16" className="size-4"><path d="M0 8h16" stroke="#222" /></svg>
        </button>
        <button aria-label="还原" className="mr-4 flex w-[70px] justify-center">
          <svg viewBox="0 0 16 16" className="size-4" fill="none" stroke="#111" strokeWidth="1.4">
            <path d="M4 4V3q0-2 2-2h7q2 0 2 2v7q0 2-2 2h-1" />
            <rect x="1" y="4" width="11" height="11" rx="2" />
          </svg>
        </button>
      </div>
      <nav className="flex h-7 items-center bg-[#cfcfe6] text-[18px] leading-7">
        <AppLogo className="ml-0.5 h-6 w-7" />
        <button className="ml-0.5 bg-[#ffe4b8] px-2.5">开始</button>
        <div className="flex gap-px">
          {menus.map((m) => (
            <button key={m} className="px-2.5">{m}</button>
          ))}
        </div>
        <button aria-label="最小化文档" className="mr-0.5 ml-auto flex h-6 w-[27px] items-end justify-center bg-white pb-1.5">
          <span className="h-0.5 w-2.5 bg-[#555]" />
        </button>
      </nav>
    </header>
  );
}

const combos = [
  { id: "fill", label: "自动", width: "w-[103px]" },
  { id: "alpha", label: "自动", width: "w-[103px]" },
  { id: "weight", label: "自动", width: "w-[103px]" },
  { id: "linetype", label: "自动", width: "w-[67px]", tight: true },
  { id: "symbol", label: "自动", width: "w-[66px]", tight: true, disabled: true },
  { id: "layer", label: "无", width: "w-[103px]" },
];

function GraphicBar() {
  return (
    <div className="flex h-[54px] items-center border-b-2 border-[#6c6c70] bg-[linear-gradient(#fff,#cfcfe6_40%,#cfcfe6_60%,#a0a0bc)] pt-1.5 pl-2.5">
      <div className="mb-3"><GripV /></div>
      <div className="ml-3.5 flex items-center gap-1">
        <button aria-label="颜色" className="relative flex h-[38px] w-[102px] items-center border border-[#8c8c94] bg-white pl-2.5">
          <span className="h-6 w-14 border-t-2 border-l-2 border-[#777] bg-[#0080ff]" />
          <Chevron className="right-1 text-[#555]" />
        </button>
        {combos.map((c) => (
          <div key={c.id} className={clsx("relative h-[38px]", c.width, c.disabled ? "text-[#999]" : "text-black")}>
            <select
              aria-label={c.id}
              disabled={c.disabled}
              className={clsx(
                "h-full w-full appearance-none overflow-hidden border border-[#b4b4bc] bg-white pl-1.5 text-[18px] leading-8",
                c.tight ? "pr-8" : "pr-6",
              )}
            >
              <option>{c.label}</option>
            </select>
            <Chevron className="top-4 right-1" />
          </div>
        ))}
      </div>
      <div className="ml-0.5 flex gap-3">
        <Icon name="brush" />
        <Icon name="wizard" />
      </div>
      <div className="mb-3 ml-5"><GripV /></div>
      <div className="ml-3.5 flex gap-3">
        <Icon name="sheetCheck" />
        <Icon name="checks" />
        <Icon name="checkHelp" />
      </div>
      <div className="mb-3 ml-5"><GripV /></div>
      <Icon name="partner" className="ml-3.5 h-8 w-9" />
    </div>
  );
}

type TreeItem = { icon: string; label: string; active?: boolean };

const tree: TreeItem[][] = [
  [{ icon: "point", label: "点.3" }],
  [
    { icon: "point", label: "点.4" },
    { icon: "intersect", label: "相交.5" },
    { icon: "intersect", label: "相交.6" },
    { icon: "point", label: "点.5" },
    { icon: "point", label: "点.6" },
  ],
  [
    { icon: "point", label: "点.7", active: true },
    { icon: "point", label: "点.8" },
    { icon: "intersect", label: "相交.7" },
    { icon: "intersect", label: "相交.8" },
    { icon: "point", label: "点.9" },
  ],
  [
    { icon: "point", label: "点.10" },
    { icon: "point", label: "点.11", active: true },
    { icon: "point", label: "点.12" },
    { icon: "circleDark", label: "圆.1" },
    { icon: "circleDark", label: "圆.2" },
  ],
  [
    { icon: "mirror", label: "对称.1", active: true },
    { icon: "mirror", label: "对称.2" },
  ],
];

function SpecTree() {
  return (
    <div className="-mt-[5px] ml-[49px] text-[25px] leading-[37px] text-white">
      {tree.map((group, i) => (
        <ul key={i} className={clsx("border-l-4 border-white", i < 3 ? "pt-0.5" : "pt-px")}>
          {group.map((item) => (
            <li key={item.label} className="flex h-[51px] items-center">
              <span className="h-[3px] w-5 bg-white" />
              <Icon name={item.icon} className={item.icon === "mirror" ? "h-10 w-[43px]" : "size-[43px]"} />
              <span className={clsx("ml-[3px] rounded-[3px] px-0.5", item.active ? "bg-[#ff8000]" : "bg-[#333366]")}>
                {item.label}
              </span>
            </li>
          ))}
        </ul>
      ))}
      <div className="h-3 border-l-4 border-white" />
      <div className="-ml-[9px] flex h-6 items-center">
        <button
          aria-label="展开"
          className="flex size-6 items-center justify-center rounded-full bg-[radial-gradient(circle_at_40%_30%,#d8d8d8,#6e6e6e)]"
        >
          <svg viewBox="0 0 16 16" className="size-[18px]"><path d="M8 0v16M0 8h16" stroke="#000" strokeWidth="4" /></svg>
        </button>
        <span className="h-[3px] w-[9px] bg-white" />
        <Icon name="loft" className="size-[43px]" />
        <span className="ml-[3px] rounded-[3px] bg-[#333366] px-0.5 underline decoration-2 underline-offset-4">多截面曲面.1</span>
      </div>
    </div>
  );
}

const stars: [number, number, string, boolean][] = [
  [1322, 317, "#fff", true],
  [1536, 403, "#fff", true],
  [1506, 559, "#fff", true],
  [1279, 467, "#ff8000", true],
  [1265, 590, "#fff", false],
  [1336, 697, "#fff", false],
  [1354, 627, "#fff", false],
  [1245, 660, "#ff8000", false],
  [1084, 735, "#fff", true],
  [1339, 817, "#fff", true],
  [1270, 1028, "#fff", true],
  [991, 942, "#ff8000", true],
];

const knots = [
  [1191, 346], [1446, 291], [1628, 522], [1372, 599], [1354, 627], [1245, 660],
  [1168, 709], [995, 763], [1339, 817], [1356, 993], [1180, 1065], [991, 942],
];

// label text, its left/baseline, and the point its leader ends on
const callouts: [string, number, number, number, number][] = [
  ["闭合点1", 1315, 439, 1279, 467],
  ["截面1", 1670, 492, 1630, 521],
  ["截面2", 1392, 599, 1355, 626],
  ["闭合点2", 1279, 634, 1245, 660],
  ["引导线1", 1253, 682, 1218, 708],
  ["闭合点3", 1024, 919, 992, 941],
  ["截面3", 1216, 1043, 1181, 1064],
];

// horizontal run, slanted run, then a narrow arrow head lying along the slant
function leader(x: number, y: number, ex: number, ey: number) {
  const kx = x - 21;
  const ky = y - 2;
  const len = Math.hypot(kx - ex, ky - ey);
  const ux = (kx - ex) / len;
  const uy = (ky - ey) / len;
  const bx = ex + ux * 16;
  const by = ey + uy * 16;
  return `M${x - 1} ${ky}H${kx}L${ex} ${ey}L${bx - uy * 3} ${by + ux * 3}L${bx + uy * 3} ${by - ux * 3}Z`;
}

function Model() {
  return (
    <svg
      viewBox="0 122 2445 1154"
      className="pointer-events-none absolute top-0 left-0 h-[1154px] w-[2445px] max-w-none"
      fill="none"
      strokeWidth="1.5"
      role="img"
      aria-label="三维模型"
    >
      <g stroke="#f4f4f8">
        <path d="M1360 414L1420 399 1464 456 1404 471zM1122 857L1186 834 1226 897 1162 920z" />
        <path d="M1248 623L1310 604 1351 664 1292 683zM1257 676L1292 589 1334 648 1308 697 1268 638 1282 628 1344 610 1317 658z" />
        <path d="M1323 317Q1321 380 1312 430 1300 495 1283 543 1270 585 1246 623 1224 665 1190 693 1170 712 1144 723 1115 733 1084 734" />
        <path d="M1536 403Q1492 446 1450 493 1412 538 1372 597 1356 626 1343 653 1333 670 1328 680 1315 712 1312 743 1311 770 1317 787 1324 804 1339 817" />
        <path d="M1506 559Q1470 572 1455 580 1425 598 1399 623 1370 652 1350 677L1336 697 1322 723Q1306 756 1297 780 1288 810 1283 827 1277 855 1275 873 1266 930 1269 980L1270 1027" />
      </g>
      <g stroke="#e87a10">
        <path d="M1191 346L1446 291 1628 522 1372 599z" />
        <path d="M995 763L1168 709 1339 817 1356 993 1180 1065 991 942z" />
        <path d="M1279 467Q1290 525 1279 567 1264 622 1245 660 1232 688 1215 710 1196 738 1180 760 1155 790 1127 820 1080 869 1040 902L991 942" />
        <ellipse cx="1300" cy="644" rx="69" ry="50" transform="rotate(28.5 1300 644)" />
      </g>
      {stars.map(([x, y, color, dark]) => (
        <g key={`${x}-${y}`}>
          <path d={`M${x - 6} ${y - 7}l12 14m0-14l-12 14`} stroke={color} />
          {dark && <path d={`M${x - 3} ${y - 3}h6v6h-6z`} fill="#000" />}
        </g>
      ))}
      {knots.map(([x, y]) => (
        <path key={`${x}-${y}`} d={`M${x - 2} ${y - 2}h4v4h-4z`} fill="#ff8000" />
      ))}
      <g stroke="#f40a10">
        <path d="M1323 518L1313 527 1337 549z" />
        <path d="M1245 660L1282 718M1290 714L1277 722 1303 747z" />
        <path d="M991 944V1006M983 1007h13l-6 33z" />
        {callouts.map(([text, x, y, ex, ey]) => (
          <path key={text} d={leader(x, y, ex, ey)} />
        ))}
      </g>
      <g fill="#ff0008" fontSize="20">
        {callouts.map(([text, x, y]) => (
          <text key={text} x={x} y={y}>{text}</text>
        ))}
      </g>
      <g stroke="#dcc8ff" strokeWidth="2.2">
        <path d="M2258 284L2213 218Q2222 199 2240 198 2262 201 2287 230z" fill="#17175c" />
        <path d="M2258 284L2287 230Q2315 223 2328 230 2345 243 2329 264z" fill="#17175c" />
        <path d="M2258 284Q2304 312 2299 356L2223 378 2217 372 2243 281z" fill="#1b4a60" />
        <path d="M2258 284L2223 378M2287 230L2293 218" />
        <circle cx="2293" cy="217" r="4" fill="#dcc8ff" />
      </g>
      <g fill="#e6dc00" fontSize="22" className="font-['DejaVu_Sans',sans-serif]">
        <text x="2219" y="199">y</text>
        <text x="2298" y="200">z</text>
        <text x="2332" y="242">x</text>
      </g>
    </svg>
  );
}

function CloseBox() {
  return (
    <button aria-label="关闭" className="flex h-[30px] w-[30px] shrink-0 items-center justify-center bg-[#c75050]">
      <svg viewBox="0 0 10 10" className="size-2.5">
        <path d="M1 1l8 8M9 1L1 9" stroke="#fff" strokeWidth="2.4" />
      </svg>
    </button>
  );
}

function OperationsPanel() {
  return (
    <section className="absolute top-[151px] right-[202px] w-[293px] overflow-hidden rounded-[4px] bg-[#f4f1f2] shadow-[0_0_0_1px_#55557a,0_8px_14px_rgba(0,0,0,0.35)]">
      <div className="flex h-[46px] items-center justify-between border-b border-[#dcdce0] pl-3 text-[18px]">
        <h2 className="pb-1 leading-7">操作</h2>
        <div className="pt-1"><CloseBox /></div>
      </div>
      <div className="flex h-[53px] bg-[linear-gradient(#fff,#cfcfe6_35%,#cfcfe6_60%,#a4a4bc)] pt-1 pl-1.5">
        <GripV />
        <div className="mt-1 ml-3.5 flex">
          {["gridOp", "healing", "boundary", "fillet", "mirror", "extend"].map((name) => (
            <button key={name} aria-label={name} className="relative h-10 w-[45px] pb-1">
              <Icon name={name} />
              <Flyout className="bottom-0 left-8" />
            </button>
          ))}
        </div>
      </div>
    </section>
  );
}

function SurfacesPanel() {
  const tools = ["extrapol", "offset", "extrudeSurf", "cap", "orangeLoft", "bands"];
  return (
    <section className="absolute top-[603px] right-[535px] w-[54px] overflow-hidden rounded-[4px] bg-[#f6efee] shadow-[0_0_0_1px_#55557a,0_8px_14px_rgba(0,0,0,0.35)]">
      <div className="flex h-[45px] items-center border-b border-[#c8c8d8] pl-3 text-[18px]">
        <h2 className="w-3 overflow-hidden pb-1 leading-7">曲</h2>
        <div className="pt-1"><CloseBox /></div>
      </div>
      <div className="bg-[linear-gradient(90deg,#fff,#cfcfe6_30%,#c4c4da)] pb-1 pl-[5px]">
        <div className="flex h-4 items-center"><GripH /></div>
        {tools.map((name, i) => (
          <button
            key={name}
            aria-label={name}
            className={clsx("relative flex w-full items-center pt-1 pl-1.5", i < 4 ? "h-11" : "h-[42px]")}
          >
            <Icon name={name} />
            {i < 3 && <Flyout className="right-0 bottom-0" />}
          </button>
        ))}
      </div>
    </section>
  );
}

const bevel =
  "border-2 border-t-[#f2f2ff] border-l-[#f2f2ff] border-r-[#74748e] border-b-[#74748e] bg-[#cfcfe6] shadow-[inset_-2px_-2px_1px_#a2a2bc,inset_2px_2px_1px_#e4e4f8]";

const sections = [
  { id: "1", section: "项目.1", closing: "点.7" },
  { id: "2", section: "提取.3", closing: "点.2" },
  { id: "3", section: "项目.2", closing: "点.11", active: true },
];

const tabs = [
  { label: "脊线", width: "w-[67px]" },
  { label: "耦合", width: "w-[67px]" },
  { label: "重新限定", width: "w-[103px]" },
  { label: "标准元素", width: "w-[103px]" },
];

function Th({ children, width }: { children: string; width: string }) {
  return <th className={clsx("border-r-2 border-[#e4e4e4] pb-0.5 pl-2 text-left font-normal", width)}>{children}</th>;
}

function SpinField({ id, label, value }: { id: string; label: string; value: string }) {
  return (
    <div className="flex h-9 items-center">
      <input
        id={id}
        type="checkbox"
        className="size-[18px] appearance-none border-2 border-[#444] bg-[#ffffe1]"
      />
      <label htmlFor={id} className="ml-1.5 w-[168px] leading-7">{label}</label>
      <div className="flex h-9 w-[221px] border-2 border-t-[#777] border-r-white border-b-white border-l-[#777] bg-[#f0f0f0]">
        <input
          aria-label={label}
          disabled
          defaultValue={value}
          className="min-w-0 flex-1 pb-1 pl-0.5 font-['Open_Sans',sans-serif] text-[18px] leading-7 text-[#8a8a8a]"
        />
        <div className="flex w-[30px] flex-col border border-[#777]">
          {["M5 8l5-5", "M3 6h9"].map((d) => (
            <button key={d} disabled aria-label={`${label} 调整`} className="flex flex-1 items-center justify-center border-r-2 border-b-2 border-[#777] bg-[#f4f4f4]">
              <svg viewBox="0 0 14 11" className="h-2.5 w-3.5"><path d={d} stroke="#222" strokeWidth="1.6" /></svg>
            </button>
          ))}
        </div>
      </div>
    </div>
  );
}

function FooterButton({ label, from, to }: { label: string; from?: string; to?: string }) {
  return (
    <button className={clsx("flex h-[35px] w-[81px] items-center justify-center gap-1.5 pb-1 leading-6", bevel)}>
      {from && (
        <svg viewBox="0 0 20 20" className="size-[19px]" aria-hidden="true">
          <circle cx="10" cy="10" r="9" fill={from} />
          <circle cx="7" cy="6" r="3" fill={to} />
        </svg>
      )}
      {label}
    </button>
  );
}

function Planet() {
  return (
    <svg viewBox="0 0 76 52" className="absolute bottom-0 left-0 h-[52px] w-[76px]" aria-hidden="true">
      <defs>
        <radialGradient id="glow">
          <stop offset="0" stopColor="#ff9a30" />
          <stop offset="0.35" stopColor="#ffc060" stopOpacity="0.8" />
          <stop offset="1" stopColor="#fde7c0" stopOpacity="0" />
        </radialGradient>
        <linearGradient id="ball" x1="0" y1="1" x2="0.8" y2="0">
          <stop offset="0" stopColor="#9fb8c4" />
          <stop offset="0.4" stopColor="#1c2c38" />
          <stop offset="0.7" stopColor="#3a78a0" />
          <stop offset="1" stopColor="#b8dcf0" />
        </linearGradient>
      </defs>
      <circle cx="40" cy="32" r="34" fill="url(#glow)" />
      <path d="M0 24Q40 18 64 52H0z" fill="url(#ball)" />
      <path d="M0 25Q20 20 36 32 20 42 0 36z" fill="#b4ccd6" opacity="0.75" />
    </svg>
  );
}

function LoftDialog() {
  return (
    <section className="absolute top-[435px] right-[25px] w-[512px] overflow-hidden rounded-[9px] bg-[linear-gradient(#efdccb,#f4e4c4_40%,#fde7c2_75%)] text-[18px] shadow-[0_0_0_1px_#6a6a88,0_14px_30px_rgba(0,0,0,0.5)]">
      <div className="flex h-[45px] items-center bg-[#f3f3f3] pb-0.5 pl-3.5 text-[#8a8a8a]">
        <h2 className="leading-7">多截面曲面定义</h2>
        <button aria-label="帮助" className="ml-auto w-9 text-[20px]">?</button>
        <button aria-label="关闭" className="mr-[19px] ml-9 flex w-8 justify-center">
          <svg viewBox="0 0 16 16" className="size-4"><path d="M1 1l14 14M15 1L1 15" stroke="#777" strokeWidth="1.3" /></svg>
        </button>
      </div>

      <div className="px-3.5 pt-3.5 pb-[11px]">
        <div className="h-[136px] w-[482px] border-2 border-[#8a929a] bg-white pl-1.5">
          <table className="w-[427px] table-fixed">
            <thead>
              <tr className="h-[35px]">
                <th className="w-12 border-r-2 border-[#e4e4e4] pb-0.5 pl-1 text-left font-normal">编号</th>
                <Th width="w-[180px]">截面</Th>
                <Th width="w-[72px]">支持面</Th>
                <Th width="w-[54px]">连续</Th>
                <Th width="w-[73px]">闭合点</Th>
              </tr>
            </thead>
            <tbody>
              {sections.map((row) => (
                <tr key={row.id} className={clsx("h-8 leading-7", row.active && "bg-[#0078d7] text-white")}>
                  <td className="pb-0.5 pl-1">{row.id}</td>
                  <td className="pb-0.5 pl-[9px]">{row.section}</td>
                  <td />
                  <td />
                  <td className="pb-0.5 pl-[9px]">{row.closing}</td>
                </tr>
              ))}
            </tbody>
          </table>
        </div>

        <div className="mt-2 ml-1 w-[476px]">
          <div role="tablist" className="flex items-end">
            <button role="tab" aria-selected="true" className="h-10 w-[91px] rounded-tl border-t-2 border-r-3 border-l-2 border-t-white border-r-[#222] border-l-white pb-1 leading-7">
              引导线
            </button>
            {tabs.map((t) => (
              <button
                key={t.label}
                role="tab"
                aria-selected="false"
                className={clsx("mr-0.5 h-9 border-t-2 border-r-3 border-l-2 border-t-white border-r-[#222] border-l-white pb-1 leading-7", t.width)}
              >
                {t.label}
              </button>
            ))}
          </div>
          <div className="border-t-2 border-r-3 border-b-3 border-l-2 border-t-[#fdf6ea] border-r-[#222] border-b-[#222] border-l-white pt-1.5 pr-2.5 pb-2.5 pl-1.5">
            <div className="h-[150px] border-2 border-[#8a929a] bg-white pl-1.5">
              <table className="w-full table-fixed">
                <thead>
                  <tr className="h-[35px]">
                    <th className="w-12 border-r-2 border-[#e4e4e4] pb-0.5 pl-1 text-left font-normal">编号</th>
                    <Th width="w-auto">引导线</Th>
                    <Th width="w-[72px]">支持面</Th>
                    <Th width="w-[54px]">连续</Th>
                  </tr>
                </thead>
                <tbody>
                  <tr className="h-8 leading-7">
                    <td className="pb-0.5 pl-1">1</td>
                    <td className="pb-0.5 pl-[9px]">对称.1</td>
                    <td />
                    <td />
                  </tr>
                </tbody>
              </table>
            </div>
          </div>
        </div>

        <div className="mt-2.5 ml-0.5 flex w-[478px] gap-0.5 leading-6">
          {["替换", "移除", "添加"].map((label) => (
            <button key={label} className={clsx("h-9 flex-1 pb-1", bevel)}>{label}</button>
          ))}
        </div>

        <div className="mt-1.5 flex h-9 items-center">
          <label htmlFor="continuity" className="w-14 pb-3 leading-6">连续:</label>
          <div className="relative h-9 w-[210px] text-[#9a9a9a]">
            <select id="continuity" disabled className="h-full w-full appearance-none border border-[#ececec] bg-[#fafafa] pl-1 text-[18px]">
              <option>切线</option>
            </select>
            <Chevron className="top-3.5 right-1.5" />
          </div>
        </div>

        <fieldset className="mt-0.5 border-2 border-[#b4b4ac] px-0.5 pb-2 shadow-[1px_1px_0_#fff]">
          <legend className="ml-2 px-1 leading-6">光顺参数</legend>
          <div className="flex flex-col gap-3 pt-3">
            <SpinField id="angle" label="角度修正:" value="0.5deg" />
            <SpinField id="deviation" label="偏差:" value="0.001mm" />
          </div>
        </fieldset>

        <div className="mt-[15px] flex justify-end gap-2.5">
          <FooterButton label="确定" from="#0a9a10" to="#a8f0a0" />
          <FooterButton label="取消" from="#e02018" to="#ffb0a8" />
          <FooterButton label="预览" />
        </div>
      </div>
      <Planet />
    </section>
  );
}

type SideSlot = { icon?: string; sep?: "grip" | "line"; height: string; fly?: boolean };

const sideSlots: SideSlot[] = [
  { sep: "grip", height: "h-4" },
  { icon: "workbench", height: "h-12" },
  { sep: "grip", height: "h-7" },
  { icon: "grayA", height: "h-[42px]" },
  { icon: "grayB", height: "h-[42px]" },
  { icon: "grayC", height: "h-[42px]" },
  { icon: "grayD", height: "h-[42px]" },
  { sep: "grip", height: "h-6" },
  { icon: "arrow", height: "h-11", fly: true },
  { icon: "geoSelect", height: "h-11", fly: true },
  { sep: "grip", height: "h-7" },
  { icon: "sketch", height: "h-11", fly: true },
  { sep: "grip", height: "h-7" },
  { icon: "pointTool", height: "h-11", fly: true },
  { icon: "line", height: "h-11", fly: true },
  { icon: "plane", height: "h-11", fly: true },
  { sep: "line", height: "h-2" },
  { icon: "sweep", height: "h-12", fly: true },
  { icon: "intersectTool", height: "h-11" },
  { icon: "fillSurf", height: "h-11", fly: true },
  { sep: "line", height: "h-2" },
  { icon: "circle", height: "h-12", fly: true },
  { icon: "spline", height: "h-12", fly: true },
  { sep: "grip", height: "h-7" },
  { icon: "chart", height: "h-10" },
  { sep: "grip", height: "h-6" },
  { icon: "wand", height: "h-11" },
  { sep: "grip", height: "h-6" },
  { icon: "extrude", height: "h-[42px]" },
  { icon: "revolve", height: "h-[42px]" },
];

function SideBar() {
  return (
    <aside className="flex w-[60px] shrink-0 flex-col border-l-2 border-white bg-[linear-gradient(90deg,#fff,#cfcfe6_25%)] pt-0.5 pl-1.5">
      {sideSlots.map((s, i) =>
        s.icon ? (
          <button key={i} aria-label={s.icon} className={clsx("relative flex shrink-0 items-center pl-1.5", s.height)}>
            <Icon name={s.icon} className={s.icon === "workbench" ? "size-9" : "size-8"} />
            {s.fly && <Flyout className="right-1.5 bottom-0.5" />}
          </button>
        ) : (
          <div key={i} className={clsx("flex shrink-0 items-center", s.height)}>
            <GripH wide={s.sep === "line"} />
          </div>
        ),
      )}
      <button aria-label="更多" className="mt-auto mr-2.5 mb-2 self-end">
        <svg viewBox="0 0 12 14" className="h-3.5 w-3" fill="none" stroke="#9a9aa6" strokeWidth="1.6">
          <path d="M1 1l5 5 5-5M1 7l5 5 5-5" />
        </svg>
      </button>
    </aside>
  );
}

// "+" marks a tool that opens a flyout
const bottomGroups = [
  ["newFile", "open", "save", "print", "cut", "copy", "paste", "undo+", "redo+", "help"],
  ["abc+"],
  ["bookAxis+"],
  ["paramSurf+"],
  ["fx", "balloon", "grayLink", "table+", "relations", "lock+", "listBrace"],
  ["plane3d", "fitAll", "pan", "rotate", "zoomIn", "zoomOut", "normalView", "multiView", "isoView+", "cylinder+", "hideShow", "swapSpace"],
  ["catalog"],
  ["measure", "caliper", "weight"],
  ["camera"],
  ["update", "manualUpdate", "axis", "histTree", "gridBlue+", "boxPlane+", "cubeCyan", "bolt", "grayHand", "treeArrow", "yellowSurf+", "stack", "bookBlue"],
];

function BottomBar() {
  return (
    <footer className="flex h-12 overflow-hidden bg-[linear-gradient(#fff_10%,#cfcfe6_50%,#cfcfe6_75%,#b4b4c8)]">
      {bottomGroups.map((group, i) => (
        <div key={i} className="flex">
          <div className={clsx("flex shrink-0 justify-center pt-[7px]", i === 0 ? "w-5" : "w-7")}>
            <GripV />
          </div>
          {group.map((entry) => {
            const name = entry.replace("+", "");
            const fly = entry.endsWith("+");
            return (
              <button
                key={entry}
                aria-label={name}
                className={clsx(
                  "relative flex shrink-0 pt-4",
                  name === "grayLink" ? "w-7" : fly ? "w-[46px] pl-[5px]" : "w-[42px] pl-[5px]",
                )}
              >
                <Icon name={name} className="h-[31px] w-8" />
                {fly && <span className="absolute right-0 bottom-0 h-0.5 w-2.5 bg-black" />}
              </button>
            );
          })}
        </div>
      ))}
      <button aria-label="更多" className="mt-3 ml-auto h-5 w-5">
        <svg viewBox="0 0 16 16" className="size-4" fill="none" stroke="#9a9aa6" strokeWidth="1.6">
          <path d="M2 2l5 6-5 6M8 2l5 6-5 6" />
        </svg>
      </button>
      <svg viewBox="0 0 20 36" className="mt-3 ml-1.5 h-9 w-5" fill="none" stroke="#4a3a8c" strokeWidth="2" aria-hidden="true">
        <path d="M6 12h14Q16 26 8 25L13 13M19 28q-6 2-4 10" />
        <path d="M19 0v3" stroke="#e03030" />
      </svg>
    </footer>
  );
}

function TreeScroll() {
  return (
    <div className="ml-[3px] flex w-[30px] shrink-0 flex-col bg-[#7b7bff]">
      <button aria-label="向上" className="flex h-7 items-center justify-center border border-[#a8a8ff] bg-[#7b7bff]">
        <svg viewBox="0 0 18 18" className="size-[18px]"><path d="M9 0l9 17H0z" /></svg>
      </button>
      <div className="grow-[4] bg-[repeating-conic-gradient(#7676f0_0_25%,#44448e_0_50%)] bg-[length:2px_2px]" />
      <div className="grow-[5] border-t border-white" />
      <button aria-label="向下" className="flex h-7 items-center justify-center border border-[#a8a8ff]">
        <svg viewBox="0 0 18 18" className="size-[18px]"><path d="M0 1h18L9 18z" /></svg>
      </button>
    </div>
  );
}

export default function App() {
  return (
    <div className="flex min-h-screen flex-col bg-[#cfcfe6] font-['Noto_Sans_CJK_SC','Noto_Sans',sans-serif] text-black">
      <TitleBar />
      <GraphicBar />
      <main className="flex flex-1">
        <div className="relative flex min-w-0 flex-1 overflow-hidden border-t-5 border-[#85857f] bg-[linear-gradient(#333366,#494974_66%,#8484a4_87%,#acacc2)]">
          <TreeScroll />
          <SpecTree />
          <Model />
          <p className="absolute top-[180px] left-[470px] text-[36px] leading-[46px] whitespace-nowrap text-[#fa3636]">
            多截面实体，选择截面和引导线
          </p>
          <p className="absolute top-[411px] left-[787px] text-[36px] leading-[46px] whitespace-nowrap text-[#fa3636]">
            要把闭合点进行替换
          </p>
          <OperationsPanel />
          <SurfacesPanel />
          <LoftDialog />
        </div>
        <SideBar />
      </main>
      <BottomBar />
    </div>
  );
}
